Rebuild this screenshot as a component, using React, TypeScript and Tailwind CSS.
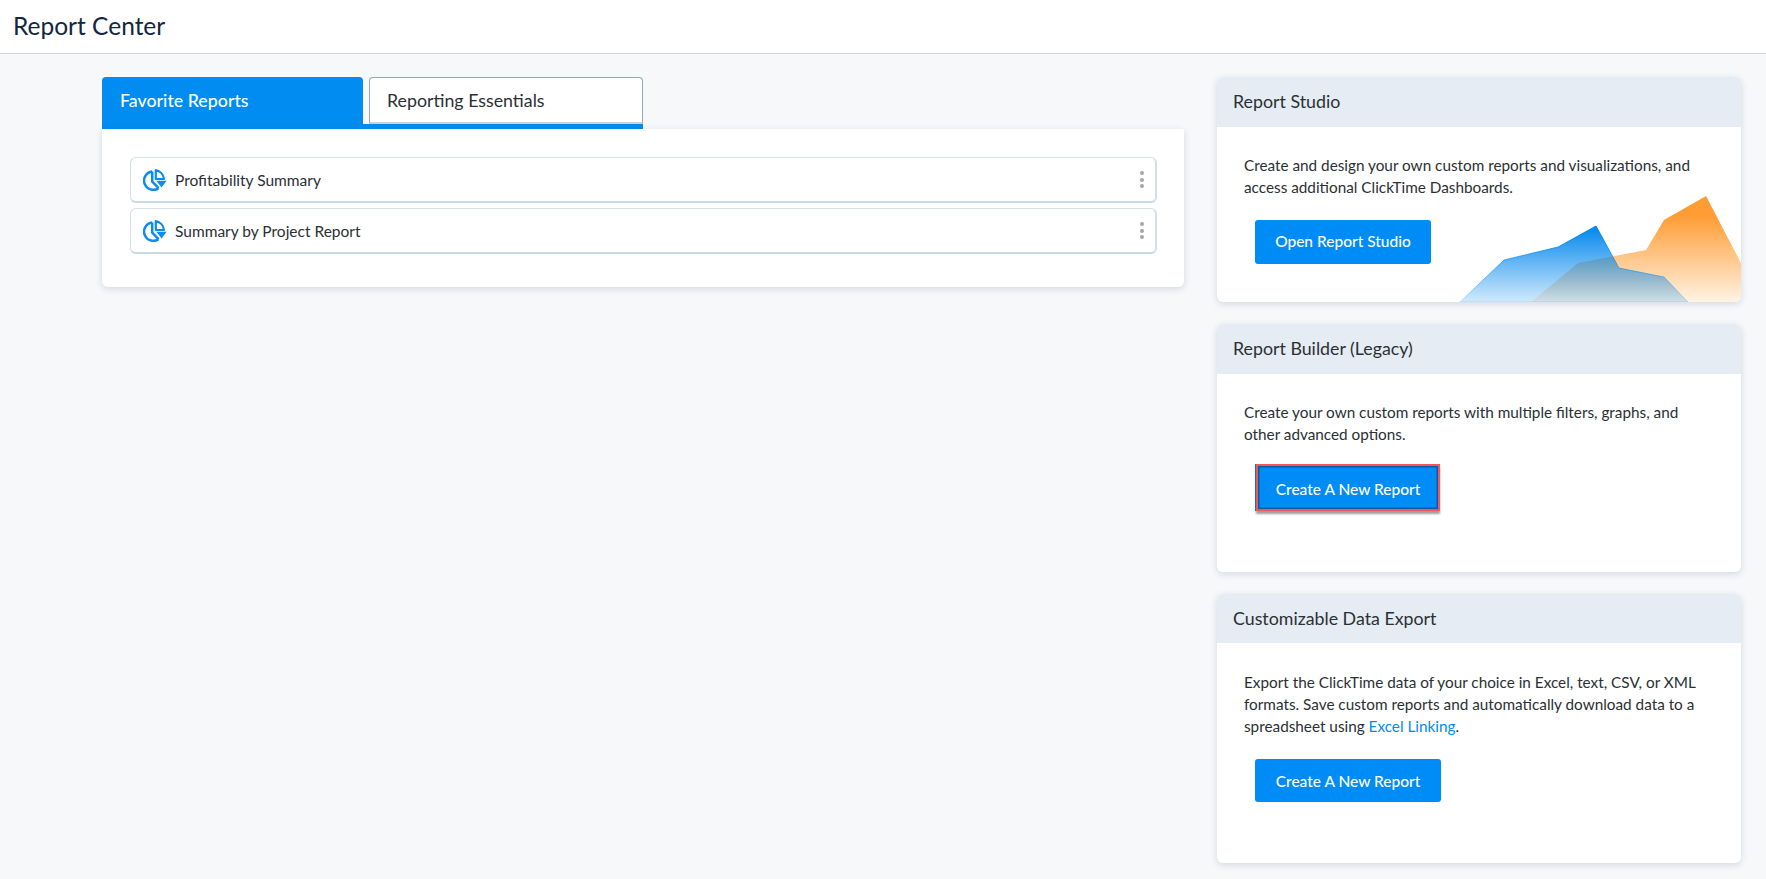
const Pie = () => (
  <svg width="24" height="22" viewBox="0 0 24 22" className="shrink-0 text-[#0a8cf0]">
    {/* slice outline, top right */}
    <path d="M12.8 1.1 A10 10 0 0 1 21 10 L12.8 10 Z" fill="none" stroke="currentColor" strokeWidth="2.2" strokeLinejoin="round" />
    {/* open ring */}
    <path d="M9.2 2.5 A9.2 9.2 0 1 0 15.5 19.2" fill="none" stroke="currentColor" strokeWidth="2.5" />
    <path d="M9.2 2.5 V12.6 L15.5 19.2" fill="none" stroke="currentColor" strokeWidth="2.5" />
    {/* arrow */}
    <path d="M13.4 11.8 H23.6 L18.5 18.6 Z" fill="currentColor" />
  </svg>
);

const Dots = () => (
  <div className="ml-auto flex flex-col gap-[2.5px] pr-[1px]">
    <span className="h-1 w-1 rounded-full bg-[#a3a7aa]" />
    <span className="h-1 w-1 rounded-full bg-[#a3a7aa]" />
    <span className="h-1 w-1 rounded-full bg-[#a3a7aa]" />
  </div>
);

const ReportRow = ({ label }: { label: string }) => (
  <div className="flex h-[46px] items-center rounded-md border border-[#d3dfe9] border-b-2 border-r-2 border-b-[#c9d9e6] border-r-[#d3e0ea] bg-white pl-[12px] pr-[10px]">
    <Pie />
    <span className="ml-[8px] pt-[3px] text-[15.5px] text-[#2b3034]">{label}</span>
    <Dots />
  </div>
);

const Chart = () => (
  <svg className="absolute bottom-0 right-0" width="281" height="107" viewBox="1460 195 281 107">
    <defs>
      <linearGradient id="orange" x1="0" y1="196" x2="0" y2="302" gradientUnits="userSpaceOnUse">
        <stop offset="0.18" stopColor="#ff9c33" />
        <stop offset="1" stopColor="#fff3e4" />
      </linearGradient>
      <linearGradient id="blue" x1="0" y1="226" x2="0" y2="302" gradientUnits="userSpaceOnUse">
        <stop offset="0" stopColor="#0086ec" />
        <stop offset="1" stopColor="#0088ee" stopOpacity="0.18" />
      </linearGradient>
    </defs>
    <polygon points="1531,302 1578,263 1646,250 1664,220 1706,196 1741,263 1741,302" fill="url(#orange)" />
    <polygon points="1460,302 1504,260 1558,247 1596,226 1619,268 1664,277 1688,302" fill="url(#blue)" stroke="url(#blue)" strokeWidth="1" />
  </svg>
);

const Btn = ({ label, size }: { label: string; size: string }) => (
  <button className={`ml-[11px] rounded-[3px] bg-[#008cf7] text-center text-[15.5px] font-medium text-white ${size}`}>
    {label}
  </button>
);

const SideCard = ({ title, height, head, children }: { title: string; height: string; head: string; children: React.ReactNode }) => (
  <section className={`relative overflow-hidden rounded-md bg-white shadow-[0_2px_7px_rgba(40,60,80,0.16)] ${height}`}>
    <h2 className={`flex items-center bg-[#e5ecf3] pb-[1px] pl-[16px] text-[17.8px] text-[#2b3034] ${head}`}>{title}</h2>
    <div className="px-[27px] pt-[27px]">{children}</div>
  </section>
);

export default function App() {
  return (
    <div className="min-h-[879px] overflow-hidden bg-[#f6f8fa] font-['Lato','Liberation_Sans',sans-serif]">
      <header className="flex h-[54px] items-center border-b border-[#cfd5db] bg-white pb-[1px] pl-[13px]">
        <h1 className="text-[24.5px] text-[#14263f]">Report Center</h1>
      </header>

      <main className="flex items-start pl-[102px] pt-[23px]">
        <div className="w-[1082px]">
          <div className="flex w-[541px] border-b-[5px] border-[#008cf0]">
            <div className="flex h-[47px] w-[261px] items-center rounded-t-[4px] bg-[#008cf0] pl-[18px] text-[17.8px] font-medium text-white">
              Favorite Reports
            </div>
            <div className="ml-[6px] flex h-[47px] w-[274px] items-center rounded-t-[4px] border border-b-2 border-[#93a8bc] border-b-[#c6d3de] bg-white pl-[17px] text-[17.8px] text-[#2b3034]">
              Reporting Essentials
            </div>
          </div>
          <div className="flex h-[158px] flex-col gap-[5px] rounded-b-md bg-white pl-[28px] pr-[27px] pt-[28px] shadow-[0_2px_7px_rgba(40,60,80,0.16)]">
            <ReportRow label="Profitability Summary" />
            <ReportRow label="Summary by Project Report" />
          </div>
        </div>

        <aside className="ml-[33px] flex w-[524px] flex-col gap-[22px]">
          <SideCard title="Report Studio" height="h-[225px]" head="h-[50px]">
            <p className="text-[15.3px] leading-[22px] text-[#2b3034]">
              Create and design your own custom reports and visualizations, and
              <br />
              access additional ClickTime Dashboards.
            </p>
            <div className="mt-[22px]">
              <Btn label="Open Report Studio" size="h-[44px] w-[176px]" />
            </div>
            <Chart />
          </SideCard>

          <SideCard title="Report Builder (Legacy)" height="h-[248px]" head="h-[50px]">
            <p className="text-[15.3px] leading-[22px] text-[#2b3034]">
              Create your own custom reports with multiple filters, graphs, and
              <br />
              other advanced options.
            </p>
            <div className="mt-[19px]">
              <button className="ml-[12px] h-[47px] w-[184px] bg-[#008cf7] pt-[4px] text-center text-[15.5px] font-medium text-white shadow-[inset_0_0_0_2px_#f0565a,inset_0_0_0_3.5px_#0a5aa5,-1px_0_0_#1670c0,0_3px_2px_rgba(60,60,60,0.5)]">
                Create A New Report
              </button>
            </div>
          </SideCard>

          <SideCard title="Customizable Data Export" height="h-[269px]" head="h-[49px]">
            <div className="pt-[1px]">
              <p className="text-[15.3px] leading-[22px] text-[#2b3034]">
                Export the ClickTime data of your choice in Excel, text, CSV, or XML
                <br />
                formats. Save custom reports and automatically download data to a
                <br />
                spreadsheet using <span className="text-[#008cf0]">Excel Linking</span>.
              </p>
            </div>
            <div className="mt-[22px]">
              <Btn label="Create A New Report" size="h-[43px] w-[186px] pt-[2px]" />
            </div>
          </SideCard>
        </aside>
      </main>
    </div>
  );
}
